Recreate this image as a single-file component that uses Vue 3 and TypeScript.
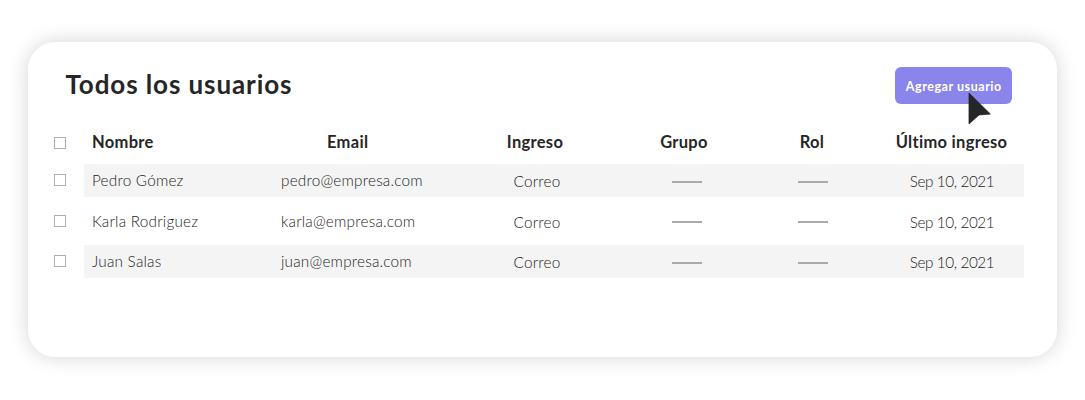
<script setup lang="ts">
interface User {
  id: string
  name: string
  email: string
  login: string
  last: string
}

const users: User[] = [
  { id: 'pedro', name: 'Pedro Gómez', email: 'pedro@empresa.com', login: 'Correo', last: 'Sep 10, 2021' },
  { id: 'karla', name: 'Karla Rodriguez', email: 'karla@empresa.com', login: 'Correo', last: 'Sep 10, 2021' },
  { id: 'juan', name: 'Juan Salas', email: 'juan@empresa.com', login: 'Correo', last: 'Sep 10, 2021' },
]
</script>

<template>
  <main class="page">
    <section class="card">
      <header class="top">
        <h1 class="title">Todos los usuarios</h1>
        <button class="add" type="button">
          <span>Agregar usuario</span>
          <svg class="cursor" viewBox="0 0 24 33" width="24" height="33" aria-hidden="true">
            <path d="M1 1 L22.3 22 L11 23 L1 32 Z" fill="#262626" stroke="#262626" stroke-width="0.8" stroke-linejoin="round" />
          </svg>
        </button>
      </header>

      <div class="line head">
        <span class="box"></span>
        <div class="cells">
          <span class="name">Nombre</span>
          <span class="email">Email</span>
          <span class="login">Ingreso</span>
          <span class="group">Grupo</span>
          <span class="role">Rol</span>
          <span class="last">Último ingreso</span>
        </div>
      </div>

      <div class="rows">
        <div v-for="u in users" :key="u.id" class="line row">
          <span class="box"></span>
          <div class="cells">
            <span class="name">{{ u.name }}</span>
            <span class="email">{{ u.email }}</span>
            <span class="login">{{ u.login }}</span>
            <span class="group"><i class="dash"></i></span>
            <span class="role"><i class="dash"></i></span>
            <span class="last">{{ u.last }}</span>
          </div>
        </div>
      </div>
    </section>
  </main>
</template>

<style>
body {
  margin: 0;
  background: #fff;
}
</style>

<style scoped>
.page {
  box-sizing: border-box;
  width: 1085px;
  height: 400px;
  padding: 42px 28px 0;
  overflow: hidden;
  background: #fff;
  font-family: Lato, "Open Sans", sans-serif;
  color: #262626;
}
.card {
  box-sizing: border-box;
  width: 1028.5px;
  height: 315px;
  padding: 25px 32.5px 0 26px;
  border-radius: 27px;
  background: #fff;
  box-shadow: 0 0 20px rgba(0, 0, 0, 0.17);
}
.top {
  display: flex;
  justify-content: space-between;
  height: 37px;
  padding: 0 11.7px 0 11.5px;
}
.title {
  margin: 0;
  font-size: 26px;
  font-weight: 700;
  line-height: 34px;
  letter-spacing: 0.9px;
  white-space: nowrap;
}
.add {
  position: relative;
  width: 117px;
  height: 37px;
  padding: 2px 0 0;
  border: 0;
  border-radius: 6px;
  background: #8a85eb;
  color: #fff;
  font: 700 12.5px/35px Lato, "Open Sans", sans-serif;
  letter-spacing: 0.55px;
  white-space: nowrap;
}
.cursor {
  position: absolute;
  left: 73px;
  top: 25px;
}
.line {
  display: grid;
  grid-template-columns: 30px 940px;
  align-items: center;
}
.head {
  height: 33px;
  margin-top: 22px;
}
.rows {
  display: grid;
  row-gap: 7.5px;
  margin-top: 5px;
}
.row {
  height: 33px;
}
.box {
  box-sizing: border-box;
  width: 12px;
  height: 12px;
  border: 1px solid #adadad;
}
.head .box {
  margin-top: 1px;
}
.row .box {
  margin-bottom: 1px;
}
.cells {
  display: grid;
  grid-template-columns: 197px 192px 128px 172px 80px 171px;
  height: 33px;
  line-height: 34px;
  white-space: nowrap;
}
.row:nth-child(odd) .cells {
  background: #f4f4f4;
}
.head .cells {
  font-size: 16.5px;
  line-height: 32px;
  font-weight: 700;
  letter-spacing: 0.3px;
}
.row .cells {
  font-size: 15.3px;
  line-height: 33px;
  font-weight: 300;
  letter-spacing: 0.22px;
  color: #1c1c1c;
}
.name {
  padding-left: 8px;
}
.login,
.group,
.role,
.last {
  text-align: center;
}
.last {
  padding-left: 27px;
}
.row .login,
.row .last {
  padding-top: 1px;
}
.row .last {
  letter-spacing: -0.4px;
}
.head .email {
  padding-left: 46px;
}
.head .login {
  padding-right: 4px;
}
.head .group {
  padding-right: 6px;
}
.head .role {
  padding-right: 2px;
}
.head .last {
  padding-right: 1px;
}
.row .group,
.row .role {
  display: flex;
  align-items: center;
  justify-content: center;
}
.dash {
  width: 30px;
  height: 2px;
  margin-top: 1px;
  background: #aaa;
}
</style>
